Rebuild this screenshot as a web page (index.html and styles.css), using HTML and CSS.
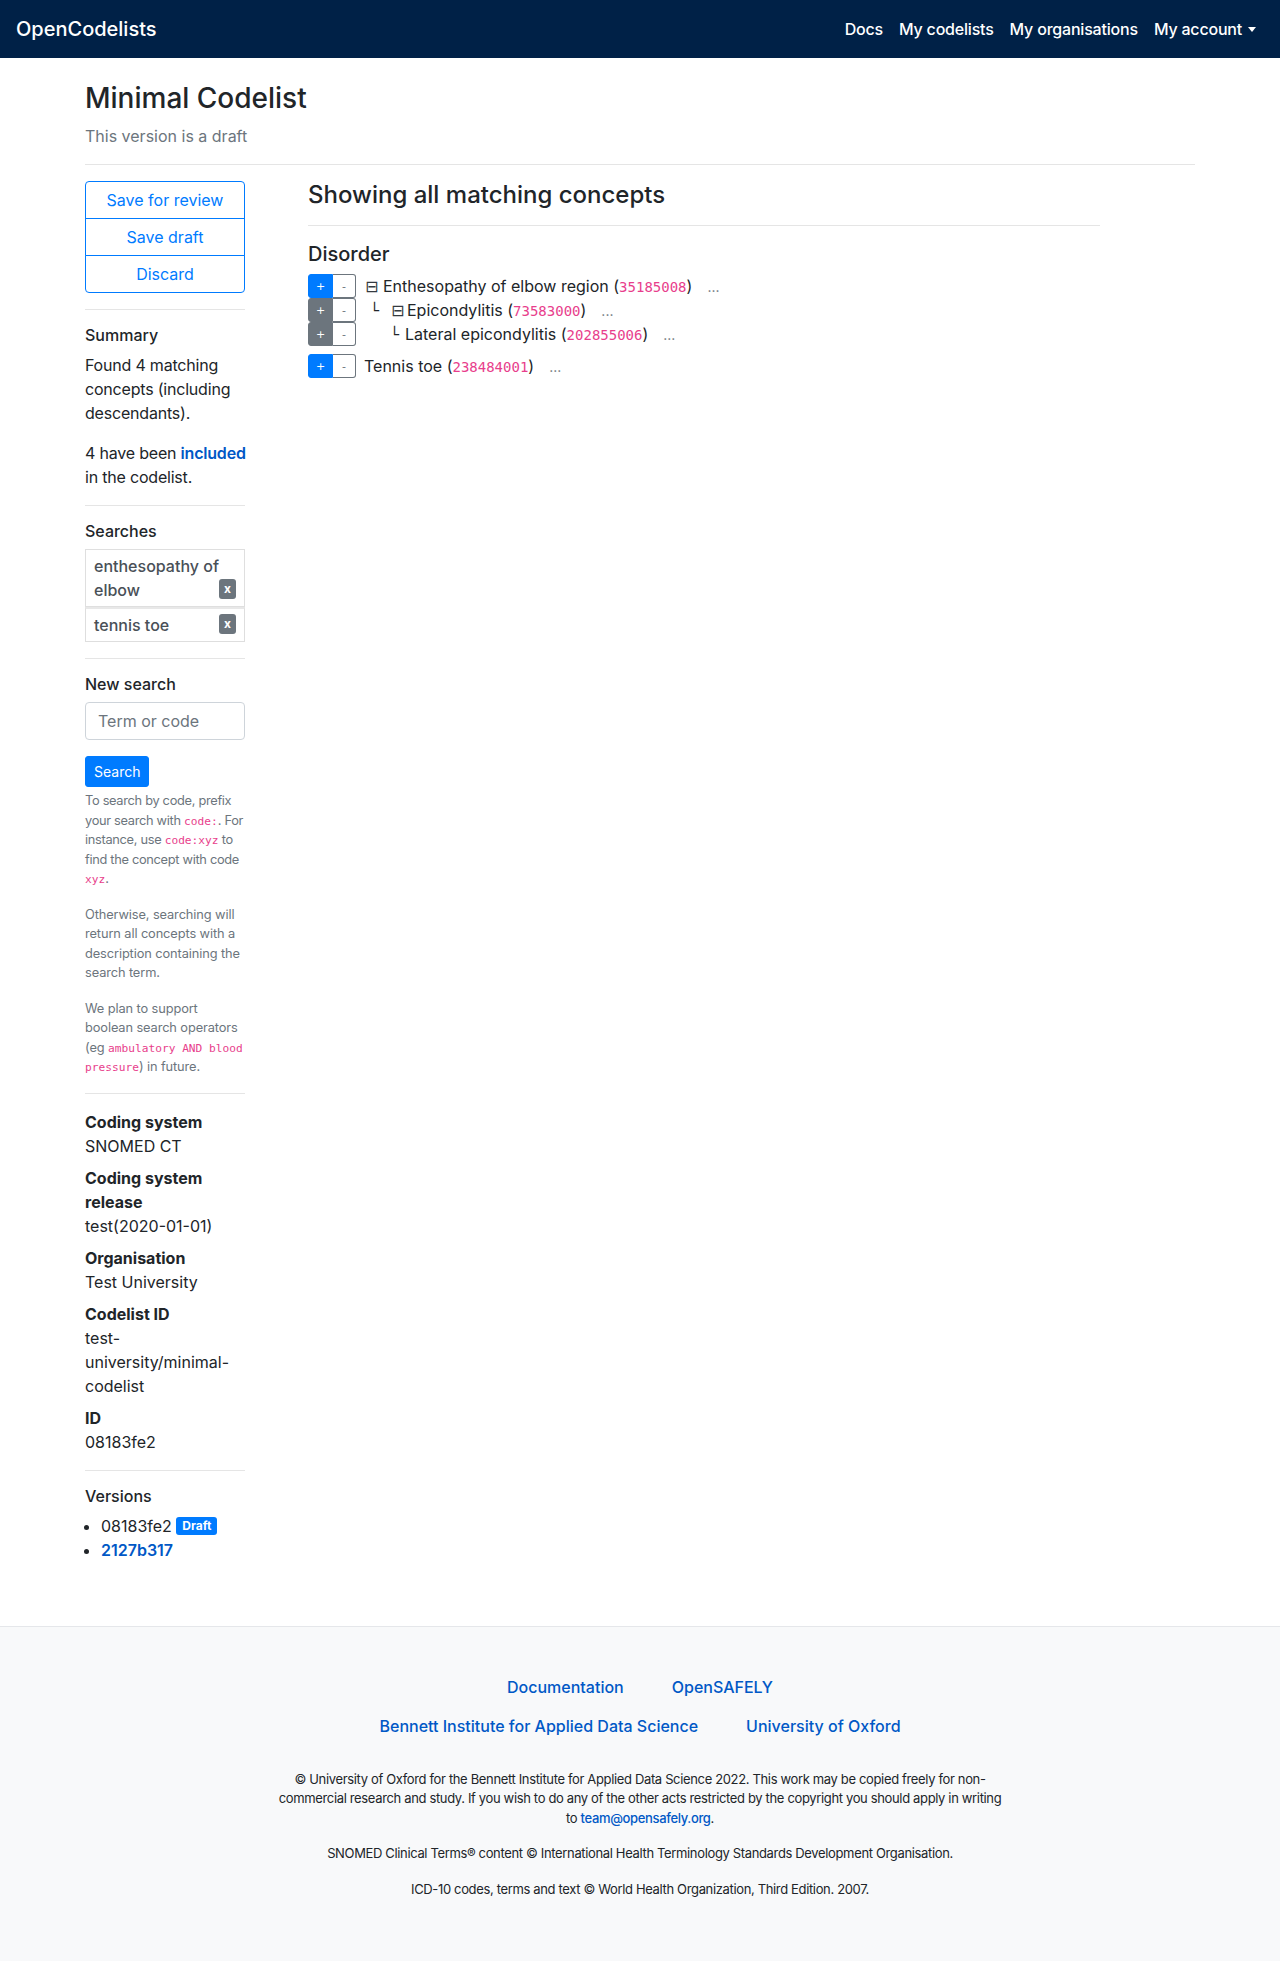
FILE: index.html
```html
<!DOCTYPE html>
<html lang="en">
<head>
<meta charset="utf-8">
<title>Minimal Codelist | OpenCodelists</title>
<link rel="stylesheet" href="styles.css">
</head>
<body>
<nav class="navbar">
  <a class="brand" href="#">OpenCodelists</a>
  <ul class="nav">
    <li><a href="#">Docs</a></li>
    <li><a href="#">My codelists</a></li>
    <li><a href="#">My organisations</a></li>
    <li><a href="#" class="dropdown">My account</a></li>
  </ul>
</nav>

<div class="container">
  <h1 class="title">Minimal Codelist</h1>
  <p class="muted lead">This version is a draft</p>
  <hr class="rule">

  <div class="layout">
    <aside class="sidebar">
      <div class="btn-vgroup">
        <button class="obtn">Save for review</button>
        <button class="obtn">Save draft</button>
        <button class="obtn">Discard</button>
      </div>
      <hr class="rule">

      <h6 class="side-h">Summary</h6>
      <p class="tight">Found 4 matching concepts (including descendants).</p>
      <p class="tight"><span class="nowrap">4 have been <a class="strong-link" href="#">included</a></span> in the codelist.</p>
      <hr class="rule">

      <h6 class="side-h">Searches</h6>
      <div class="list-group">
        <div class="lg-item">enthesopathy of elbow<span class="badge-x">x</span></div>
        <div class="lg-item">tennis toe<span class="badge-x">x</span></div>
      </div>
      <hr class="rule">

      <h6 class="side-h">New search</h6>
      <div class="form-group">
        <input class="input" type="text" placeholder="Term or code">
      </div>
      <button class="btn-sm">Search</button>
      <div class="help">
        <p class="snug">To search by code, prefix your search with <code>code:</code>. For instance, use <code>code:xyz</code> to find the concept with code <code>xyz</code>.</p>
        <p>Otherwise, searching will return all concepts with a description containing the search term.</p>
        <p>We plan to support boolean search operators (eg <code>ambulatory AND blood pressure</code>) in future.</p>
      </div>
      <hr class="rule">

      <dl class="meta">
        <dt>Coding system</dt>
        <dd>SNOMED CT</dd>
        <dt>Coding system release</dt>
        <dd>test(2020-01-01)</dd>
        <dt>Organisation</dt>
        <dd>Test University</dd>
        <dt>Codelist ID</dt>
        <dd>test-university/minimal-codelist</dd>
        <dt>ID</dt>
        <dd>08183fe2</dd>
      </dl>
      <hr class="rule">

      <h6 class="side-h">Versions</h6>
      <ul class="versions">
        <li>08183fe2 <span class="badge-draft">Draft</span></li>
        <li><a class="strong-link" href="#">2127b317</a></li>
      </ul>
    </aside>

    <main class="main">
      <h4 class="main-h">Showing all matching concepts</h4>
      <hr class="rule">
      <h5 class="type-h">Disorder</h5>

      <div class="tree">
        <div class="row">
          <div class="tbg"><span class="tb on">+</span><span class="tb off">-</span></div>
          <div class="label"><span class="tog">⊟</span>Enthesopathy of elbow region (<code class="cc">35185008</code>)<span class="more">...</span></div>
        </div>
        <div class="row">
          <div class="tbg"><span class="tb inh">+</span><span class="tb off">-</span></div>
          <div class="label"><span class="pipe p1">└</span><span class="tog t2">⊟</span>Epicondylitis (<code class="cc">73583000</code>)<span class="more">...</span></div>
        </div>
        <div class="row">
          <div class="tbg"><span class="tb inh">+</span><span class="tb off">-</span></div>
          <div class="label"><span class="pipe p2">└</span>Lateral epicondylitis (<code class="cc">202855006</code>)<span class="more">...</span></div>
        </div>
      </div>

      <div class="tree">
        <div class="row">
          <div class="tbg"><span class="tb on">+</span><span class="tb off">-</span></div>
          <div class="label">Tennis toe (<code class="cc">238484001</code>)<span class="more">...</span></div>
        </div>
      </div>
    </main>
  </div>
</div>

<footer class="footer">
  <ul class="flinks">
    <li><a href="#">Documentation</a></li>
    <li><a href="#">OpenSAFELY</a></li>
  </ul>
  <ul class="flinks second">
    <li><a href="#">Bennett Institute for Applied Data Science</a></li>
    <li><a href="#">University of Oxford</a></li>
  </ul>
  <div class="fine">
    <p>© University of Oxford for the Bennett Institute for Applied Data Science 2022. This work may be copied freely for non-commercial research and study. If you wish to do any of the other acts restricted by the copyright you should apply in writing to <a href="#">team@opensafely.org</a>.</p>
    <p>SNOMED Clinical Terms® content © International Health Terminology Standards Development Organisation.</p>
    <p>ICD-10 codes, terms and text © World Health Organization, Third Edition. 2007.</p>
  </div>
</footer>
</body>
</html>
```

FILE: styles.css
```css
* { box-sizing: border-box; }
html, body { margin: 0; padding: 0; }
body {
  font-family: Inter, "Noto Sans", "Liberation Sans", sans-serif;
  font-size: 16px;
  line-height: 1.5;
  color: #212529;
  background: #fff;
}
a { text-decoration: none; }
p { margin: 0 0 16px; }
code { font-family: "DejaVu Sans Mono", "Liberation Mono", monospace; color: #e83e8c; font-size: 87.5%; letter-spacing: 0; }
.nowrap { white-space: nowrap; }

/* navbar */
.navbar {
  height: 58px;
  background: #002147;
  display: flex;
  align-items: center;
  justify-content: space-between;
  padding: 0 16px;
}
.brand { color: #fff; font-size: 20px; font-weight: 500; line-height: 30px; }
.nav { list-style: none; margin: 0; padding: 0; display: flex; }
.nav a { display: block; color: #fff; padding: 8px 8px; font-weight: 500; line-height: 24px; letter-spacing: -0.2px; }
.dropdown::after {
  content: "";
  display: inline-block;
  margin-left: 6px;
  vertical-align: 3px;
  border-top: 5px solid #fff;
  border-left: 4px solid transparent;
  border-right: 4px solid transparent;
}

/* container */
.container { width: 1110px; margin: 0 auto; padding: 24px 0 48px; }
.title { font-size: 28px; font-weight: 500; line-height: 1.2; margin: 0 0 8px; }
.muted { color: #6c757d; }
.rule { border: 0; border-top: 1px solid rgba(0,0,0,.1); margin: 16px 0; }

.layout { display: grid; grid-template-columns: 160px 792px; column-gap: 63px; align-items: start; }

/* sidebar */
.btn-vgroup { display: flex; flex-direction: column; }
.obtn {
  font: inherit;
  color: #007bff;
  background: #fff;
  border: 1px solid #007bff;
  padding: 6px 12px;
  line-height: 24px;
  border-radius: 0;
  margin-top: -1px;
}
.obtn:first-child { margin-top: 0; border-radius: 4px 4px 0 0; }
.obtn:last-child { border-radius: 0 0 4px 4px; }

.side-h { font-size: 16px; font-weight: 500; line-height: 1.2; margin: 0 0 8px; }
.tight { letter-spacing: -0.2px; }
.strong-link { color: #0058c6; font-weight: 600; }

.list-group { display: flex; flex-direction: column; }
.lg-item {
  border: 1px solid rgba(0,0,0,.125);
  padding: 4px 8px;
  color: #495057;
  font-weight: 500;
}
.lg-item + .lg-item { border-top: 2px solid rgba(0,0,0,.09); }
.badge-x {
  float: right;
  background: #6c757d;
  color: #fff;
  font-size: 12px;
  font-weight: 700;
  line-height: 12px;
  padding: 4px 5px 4px;
  border-radius: 3px;
  margin-top: 1px;
}

.form-group { margin-bottom: 16px; }
.input {
  display: block;
  width: 100%;
  height: 38px;
  font: inherit;
  padding: 6px 12px;
  border: 1px solid #ced4da;
  border-radius: 4px;
  color: #495057;
}
.input::placeholder { color: #6c757d; }
.btn-sm {
  font: inherit;
  font-size: 14px;
  line-height: 21px;
  padding: 4px 8px;
  border: 1px solid #007bff;
  background: #007bff;
  color: #fff;
  border-radius: 3px;
}
.help { margin-top: 4px; font-size: 12.8px; line-height: 19.5px; color: #6c757d; letter-spacing: -0.1px; }
.help .snug { letter-spacing: -0.3px; }
.help code { font-size: 11.2px; line-height: 1; letter-spacing: 0; }

.meta { margin: 0 0 16px; }
.meta dt { font-weight: 700; }
.meta dd { margin: 0 0 8px; }

.versions { margin: 0 0 16px; padding-left: 16px; }
.badge-draft {
  display: inline-block;
  background: #007bff;
  color: #fff;
  font-size: 12px;
  font-weight: 700;
  line-height: 12px;
  padding: 3px 6px;
  border-radius: 3px;
  vertical-align: 2px;
}

/* main */
.main-h { font-size: 24px; font-weight: 500; line-height: 1.2; margin: 0 0 8px; }
.type-h { font-size: 20px; font-weight: 500; line-height: 1.2; margin: 0 0 8px; }
.tree { margin-bottom: 8px; }
.row { display: flex; align-items: center; height: 24px; }
.tbg { display: flex; height: 24px; }
.tb {
  display: flex; align-items: center; justify-content: center;
  height: 24px; font-size: 11px; line-height: 1;
  font-family: "DejaVu Sans", sans-serif;
}
.tb.on, .tb.inh { width: 25px; color: #fff; border-radius: 3px 0 0 3px; }
.tb.on { background: #007bff; border: 1px solid #007bff; }
.tb.inh { background: #6c757d; border: 1px solid #6c757d; }
.tb.off { width: 23px; color: #6c757d; background: #fff; border: 1px solid #6c757d; border-left: 0; border-radius: 0 3px 3px 0; }
.label { margin-left: 8px; white-space: nowrap; line-height: 24px; }
.tog { display: inline-block; width: 19px; padding-left: 1px; font-family: "DejaVu Sans", sans-serif; font-size: 16px; color: #343a40; }
.tog.t2 { width: 16px; padding-left: 0; }
.pipe { display: inline-block; font-family: "DejaVu Sans", sans-serif; font-size: 15px; color: #212529; }
.pipe.p1 { width: 27px; padding-left: 6px; }
.pipe.p2 { width: 41px; padding-left: 26px; }
.cc { font-size: 14px; }
.more { color: #6c757d; font-size: 14px; margin-left: 15px; }

/* footer */
.footer {
  background: #f8f9fa;
  border-top: 1px solid #e5e7ea;
  padding: 48px 0 48px;
  text-align: center;
}
.flinks { list-style: none; margin: 0 0 15px; padding: 0; display: flex; justify-content: center; gap: 48px; }
.flinks.second { margin-bottom: 32px; }
.flinks a { color: #0058c6; font-weight: 500; line-height: 24px; }
.fine { width: 730px; margin: 0 auto; font-size: 13px; line-height: 19.5px; color: #212529; letter-spacing: -0.35px; }
.fine a { color: #0058c6; font-weight: 500; }
.fine p:last-child { margin-bottom: 16px; }
```
